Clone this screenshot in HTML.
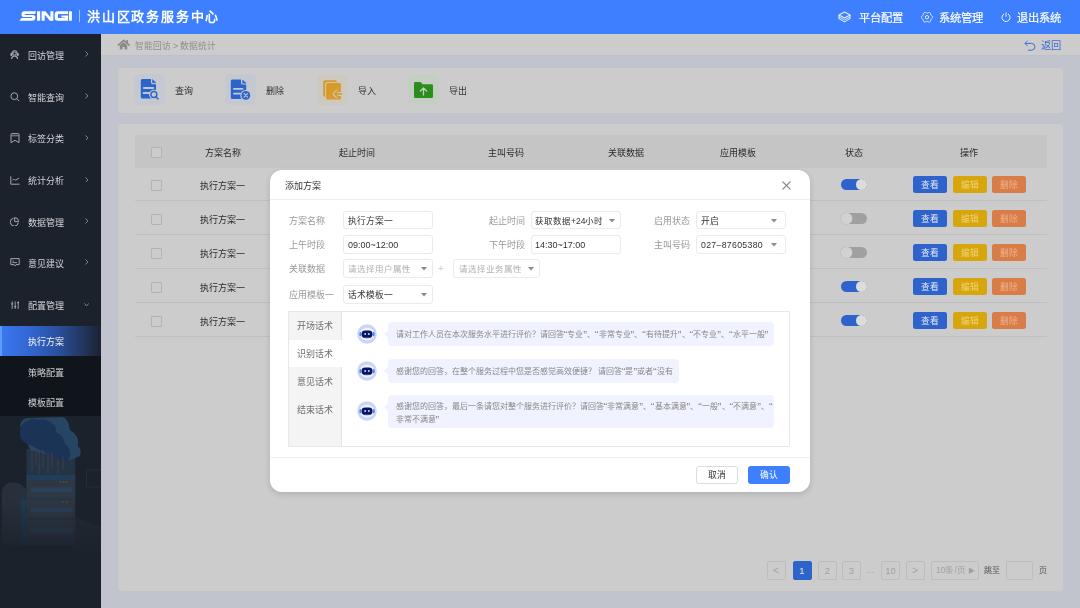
<!DOCTYPE html>
<html lang="zh-CN">
<head>
<meta charset="utf-8">
<style>
*{box-sizing:border-box;margin:0;padding:0}
html,body{will-change:transform;width:1080px;height:608px;overflow:hidden;background:#c1c4cd;font-family:"Liberation Sans",sans-serif;}
.abs{position:absolute}
#hdr{left:0;top:0;width:1080px;height:34px;background:#3d7ffe;color:#fff}
#side{left:0;top:34px;width:101px;height:574px;background:#1c222b;overflow:hidden}
#crumb{left:101px;top:34px;width:979px;height:22px;background:#cccccc;border-bottom:1px solid #bec1c9}
#tool{left:118px;top:67.5px;width:945px;height:45px;background:#cccccc;border-radius:4px}
#card{left:118px;top:124px;width:945px;height:467px;background:#cccccc;border-radius:4px}
.t{white-space:nowrap;line-height:1}
.ib{top:6.5px;width:31px;height:31px;border-radius:5px}
.tl{top:19.1px;font-size:9px;color:#333}
.cb{width:11px;height:11px;border:1px solid #b3b3b3;border-radius:1px;background:#cccccc}
.th span{position:absolute;left:0;top:0;transform:translateX(-50%);font-size:9px;color:#2b2b2b;top:25.2px}
.th{top:0}
.row{left:17px;width:911.5px;height:34px;border-bottom:1px solid #bfbfbf}
.td{top:15px;font-size:9px;color:#2b2b2b}
.tg{width:26px;height:11.5px;border-radius:5.75px;background:#a0a0a0}
.tg i{position:absolute;left:0.3px;top:0.5px;width:10.5px;height:10.5px;border-radius:50%;background:#d2d2d2;box-shadow:0 0 0 0.5px #b8b8b8}
.tg.on{background:#2e63cb}
.tg.on i{left:15.2px;background:#dcdcdc;box-shadow:none}
.bt{width:34px;height:17px;border-radius:2.5px;font-size:8.75px;line-height:18px;text-align:center;color:#e8ecf6}
.bv{background:#2e63cb}
.be{background:#d7a60c;color:#f2d27a}
.bd{background:#d87c48;color:#f0b58e}
.pg{width:19px;height:18.5px;border:1px solid #bdbdbd;border-radius:2px;font-size:9.5px;line-height:17px;text-align:center;color:#a0a0a0}
.pg.act{background:#2e63cb;border-color:#2e63cb;color:#dfe6f5}
#modal{left:270px;top:170px;width:540px;height:322px;background:#fff;border-radius:12px;box-shadow:0 2px 6px rgba(0,0,0,0.14)}
.lb{font-size:9px;color:#999}
.ip{height:18.5px;border:1px solid #ebebeb;border-radius:3px}
.ip span{position:absolute;left:4.5px;top:5px;font-size:8.75px;line-height:1;color:#333;white-space:nowrap}
.ph span{color:#b0b0b0;font-size:8.5px}
.tb{left:27.3px;font-size:9px;color:#6e6e6e}
.bb{background:#f0f3ff;border-radius:4px}
.bb i{position:absolute;left:-4px;top:8px;width:0;height:0;border-top:4px solid transparent;border-bottom:4px solid transparent;border-right:4px solid #f0f3ff}
.bb span{position:absolute;left:8px;font-size:8px;line-height:1;color:#888;white-space:nowrap}
.q{font-weight:normal;margin:0;font-size:11px;line-height:0;vertical-align:-1.5px}
.av{width:20px;height:20px}
.btn{height:18.5px;border-radius:3px;font-size:8.75px;line-height:17.5px;text-align:center}
.mi{left:28px;font-size:9px;color:#d2d4d8}
.arr{left:85px;font-size:10px;line-height:10px;color:#8a8f98}
</style>
</head>
<body>
<!-- header -->
<div id="hdr" class="abs">
  <svg class="abs" style="left:19px;top:10.5px" width="54" height="10" viewBox="19 10.5 54 10" fill="#fff">
    <path d="M24.2 10.8 H35.9 L35.2 13.4 H25.2 Q24.5 13.4 24.5 14 Q24.5 14.4 25.2 14.4 H32.5 Q35.6 14.4 35.4 17 Q35.2 20.2 32 20.2 H19.4 L21.6 17.6 H31.4 Q32.2 17.6 32.2 17 Q32.2 16.6 31.4 16.6 H24.4 Q21.4 16.6 21.5 13.9 Q21.7 10.8 24.2 10.8 Z"/>
    <path d="M37 10.8 H40.2 V20.2 H37 Z"/>
    <path d="M41.6 20.2 V10.8 H45.4 L50.4 16.8 V10.8 H53.4 V20.2 H49.8 L44.7 14.2 V20.2 Z"/>
    <path d="M58 10.8 H68 V13.4 H58.6 Q57.9 13.4 57.9 14.2 V16.9 Q57.9 17.6 58.6 17.6 H64.9 V16.9 H61.4 V14.9 H68 V20.2 H57.6 Q54.7 20.2 54.7 17.3 V13.8 Q54.7 10.8 58 10.8 Z"/>
    <path d="M68.9 10.8 H71.9 V20.2 H68.9 Z"/>
  </svg>
  <div class="abs" style="left:79px;top:9.5px;width:1px;height:12px;background:rgba(255,255,255,.55)"></div>
  <div class="abs t" style="left:87px;top:9.5px;font-size:13px;font-weight:bold;letter-spacing:1.8px">洪山区政务服务中心</div>
  <svg class="abs" style="left:837.5px;top:10.5px" width="13" height="12" viewBox="0 0 13 12" fill="none" stroke="rgba(255,255,255,0.85)" stroke-width="1.1" stroke-linejoin="round">
    <path d="M6.5 0.9 L12 3.9 L6.5 6.9 L1 3.9 Z"/>
    <path d="M1 3.9 V7.6 L6.5 10.9 L12 7.6 V3.9"/>
    <path d="M1 5.9 L6.5 8.9 L12 5.9" stroke-width="0.9"/>
  </svg>
  <div class="abs t" style="left:858.8px;top:12.6px;font-size:11.25px;-webkit-text-stroke:0.2px #fff">平台配置</div>
  <svg class="abs" style="left:920.5px;top:12px" width="12" height="10.5" viewBox="0 0 12 10.5" fill="none" stroke="#fff" stroke-width="0.85" stroke-linejoin="round">
    <path d="M11.72 5.25 L11.62 5.71 L11.34 6.12 L10.96 6.48 L10.54 6.78 L10.18 7.06 L9.93 7.35 L9.78 7.70 L9.70 8.13 L9.63 8.61 L9.49 9.10 L9.24 9.53 L8.86 9.84 L8.39 9.99 L7.86 9.97 L7.33 9.84 L6.84 9.66 L6.40 9.51 L6.00 9.45 L5.60 9.51 L5.16 9.66 L4.67 9.84 L4.14 9.97 L3.61 9.99 L3.14 9.84 L2.76 9.53 L2.51 9.10 L2.37 8.61 L2.30 8.13 L2.22 7.70 L2.07 7.35 L1.82 7.06 L1.46 6.78 L1.04 6.48 L0.66 6.12 L0.38 5.71 L0.28 5.25 L0.38 4.79 L0.66 4.38 L1.04 4.02 L1.46 3.72 L1.82 3.44 L2.07 3.15 L2.22 2.80 L2.30 2.37 L2.37 1.89 L2.51 1.40 L2.76 0.97 L3.14 0.66 L3.61 0.51 L4.14 0.53 L4.67 0.66 L5.16 0.84 L5.60 0.99 L6.00 1.05 L6.40 0.99 L6.84 0.84 L7.33 0.66 L7.86 0.53 L8.39 0.51 L8.86 0.66 L9.24 0.97 L9.49 1.40 L9.63 1.89 L9.70 2.37 L9.78 2.80 L9.93 3.15 L10.18 3.44 L10.54 3.72 L10.96 4.02 L11.34 4.38 L11.62 4.79 L11.72 5.25Z"/>
    <circle cx="6" cy="5.25" r="1.7"/>
  </svg>
  <div class="abs t" style="left:938.8px;top:12.6px;font-size:11.25px;-webkit-text-stroke:0.2px #fff">系统管理</div>
  <svg class="abs" style="left:1001px;top:12px" width="10" height="10" viewBox="0 0 10 10" fill="none" stroke="#fff" stroke-width="0.9">
    <path d="M3 2 A4 4 0 1 0 7 2"/><path d="M5 0.5 V4.8"/>
  </svg>
  <div class="abs t" style="left:1016.8px;top:12.6px;font-size:11.25px;-webkit-text-stroke:0.2px #fff">退出系统</div>
</div>
<!-- sidebar -->
<div id="side" class="abs">
  <svg class="abs" style="left:10px;top:15.6px" width="9.2" height="9.4" viewBox="0 0 9.2 9.4" fill="none" stroke="#a3a7ae" stroke-width="1.1"><path d="M1.9 4.6 Q1.9 0.8 4.6 0.8 Q7.3 0.8 7.3 4.6"/><ellipse cx="1.5" cy="4.5" rx="1.2" ry="1.7" fill="#a3a7ae" stroke="none"/><ellipse cx="7.7" cy="4.5" rx="1.2" ry="1.7" fill="#a3a7ae" stroke="none"/><circle cx="4.6" cy="3.6" r="1.5" stroke-width="1"/><path d="M1.4 9.2 Q2.2 5.9 4.6 5.9 Q7 5.9 7.8 9.2"/></svg>
  <svg class="abs" style="left:9.5px;top:58px" width="10" height="10" viewBox="0 0 10 10" fill="none" stroke="#a3a7ae" stroke-width="1"><circle cx="4.3" cy="4.2" r="3.4"/><path d="M6.8 6.7 L9.2 9.1"/></svg>
  <svg class="abs" style="left:9.5px;top:99px" width="10" height="10.5" viewBox="0 0 10 10.5" fill="none" stroke="#a3a7ae" stroke-width="1"><path d="M1 1.5 Q1 0.6 1.9 0.6 H8.1 Q9 0.6 9 1.5 V9.6 L5 7.3 L1 9.6 Z"/><path d="M1.3 2.6 H8.7" stroke-width="1.6" opacity="0.6"/></svg>
  <svg class="abs" style="left:9.5px;top:141.5px" width="10" height="9" viewBox="0 0 10 9" fill="none" stroke="#a3a7ae" stroke-width="1"><path d="M0.8 0.3 V8.2 H9.5"/><path d="M2.5 4.2 Q3.5 2.8 4.5 3.6 Q5.8 4.8 7 3.4 L9 2"/></svg>
  <svg class="abs" style="left:9.2px;top:182.7px" width="10.5" height="9.5" viewBox="0 0 10.5 9.5" fill="none" stroke="#a3a7ae" stroke-width="1"><path d="M4.5 1.2 A4 4 0 1 0 9.3 5.6"/><path d="M5.6 0.6 A4 4 0 0 1 9.6 4.6 H5.6 Z"/></svg>
  <svg class="abs" style="left:9.5px;top:224.2px" width="10" height="9" viewBox="0 0 10 9" fill="none" stroke="#a3a7ae" stroke-width="1"><path d="M0.8 0.6 H9.2 V6.6 H6 L5 7.9 L4 6.6 H0.8 Z"/><path d="M2.5 3 H4 M2.5 4.6 H7" stroke-width="0.9"/></svg>
  <svg class="abs" style="left:10.5px;top:266.5px" width="8.5" height="8.5" viewBox="0 0 8.5 8.5" fill="none" stroke="#a3a7ae" stroke-width="0.9"><path d="M1.2 0.3 V8.3 M4.2 0.3 V8.3 M7.2 0.3 V8.3"/><path d="M0.2 2.8 H2.2 M3.2 5.6 H5.2 M6.2 1.6 H8.2" stroke-width="1.3"/></svg>
  <div class="abs t mi" style="top:17.8px">回访管理</div><svg class="abs" style="left:84.6px;top:17.1px" width="3.6" height="5.8" viewBox="0 0 3.6 5.8" fill="none" stroke="#8d9198" stroke-width="0.9"><path d="M0.4 0.4 L3 2.9 L0.4 5.4"/></svg>
  <div class="abs t mi" style="top:59.8px">智能查询</div><svg class="abs" style="left:84.6px;top:59.1px" width="3.6" height="5.8" viewBox="0 0 3.6 5.8" fill="none" stroke="#8d9198" stroke-width="0.9"><path d="M0.4 0.4 L3 2.9 L0.4 5.4"/></svg>
  <div class="abs t mi" style="top:101.3px">标签分类</div><svg class="abs" style="left:84.6px;top:100.6px" width="3.6" height="5.8" viewBox="0 0 3.6 5.8" fill="none" stroke="#8d9198" stroke-width="0.9"><path d="M0.4 0.4 L3 2.9 L0.4 5.4"/></svg>
  <div class="abs t mi" style="top:143.3px">统计分析</div><svg class="abs" style="left:84.6px;top:142.6px" width="3.6" height="5.8" viewBox="0 0 3.6 5.8" fill="none" stroke="#8d9198" stroke-width="0.9"><path d="M0.4 0.4 L3 2.9 L0.4 5.4"/></svg>
  <div class="abs t mi" style="top:184.8px">数据管理</div><svg class="abs" style="left:84.6px;top:184.1px" width="3.6" height="5.8" viewBox="0 0 3.6 5.8" fill="none" stroke="#8d9198" stroke-width="0.9"><path d="M0.4 0.4 L3 2.9 L0.4 5.4"/></svg>
  <div class="abs t mi" style="top:225.8px">意见建议</div><svg class="abs" style="left:84.6px;top:225.1px" width="3.6" height="5.8" viewBox="0 0 3.6 5.8" fill="none" stroke="#8d9198" stroke-width="0.9"><path d="M0.4 0.4 L3 2.9 L0.4 5.4"/></svg>
  <div class="abs t mi" style="top:268.3px">配置管理</div><svg class="abs" style="left:83.9px;top:268.7px" width="5.2" height="3.6" viewBox="0 0 5.2 3.6" fill="none" stroke="#8d9198" stroke-width="0.9"><path d="M0.4 0.4 L2.6 2.9 L4.8 0.4"/></svg>
<svg class="abs" style="left:0;top:336px" width="101" height="215" viewBox="0 370 101 215">
    <defs>
      <linearGradient id="fade" x1="0" y1="0" x2="0" y2="1"><stop offset="0" stop-color="#1c222b" stop-opacity="0"/><stop offset="0.6" stop-color="#1c222b" stop-opacity="0"/><stop offset="0.86" stop-color="#1c222b" stop-opacity="1"/></linearGradient>
    </defs>
    <path d="M75 517 L101 527 V560 H75 Z" fill="#222a35"/>
    <rect x="86.5" y="470" width="16" height="17" rx="1" fill="none" stroke="#263240" stroke-width="0.8"/>
    <path d="M1.8 545 V494 Q1.8 482.4 13 482.4 Q22 482.4 26.5 490 V545 Z" fill="#27303c"/>
    <rect x="21" y="499.7" width="5.5" height="45" fill="#1f3a55"/>
    <rect x="26.5" y="449" width="48.7" height="96" fill="#243447"/>
    <rect x="26.5" y="475" width="48.7" height="5" fill="#223d58"/>
    <rect x="26.5" y="480" width="48.7" height="18.4" fill="#2e3744"/>
    <rect x="26.5" y="499.7" width="48.7" height="18.3" fill="#2e3744"/>
    <rect x="26.5" y="520" width="48.7" height="16.6" fill="#2e3744"/>
    <rect x="30.8" y="487.3" width="41.9" height="5" fill="#2a4159"/>
    <rect x="30.8" y="507.7" width="41.9" height="4.3" fill="#2a4159"/>
    <rect x="30.8" y="528" width="41.9" height="5" fill="#2a4159"/>
    <path d="M60 482 h1.5 M63 482 h1.5 M66 482 h1.5 M62 502 h1.5 M66 502 h1.5" stroke="#6a5a3a" stroke-width="1.2"/>
    <path d="M20 425 Q22 417 30 418 L62 417 Q68 417 70 430 Q80 436 78 446 Q82 450 80 456 L70 460 L30 450 Z" fill="#264563"/>
    <path d="M20 432 Q20 423 28 421 Q32 417 38 420 Q44 418 50 422 Q56 424 56 432 Q64 436 65 444 Q71 448 70 456 Q69 462 62 461 L24 442 Q19 438 20 432 Z" fill="#1a3357"/>
    <path d="M32 446 V471 M36 452 V465 M39 451 V474 M43 449 V467 M48 455 V474 M52 452 V468 M58 459 V474 M63 456 V470" stroke="#6e4a42" stroke-width="0.7" opacity="0.6"/>
    <rect x="0" y="370" width="101" height="215" fill="url(#fade)"/>
  </svg>
  <div class="abs" style="left:0;top:291.5px;width:101px;height:90.5px;background:#10151c"></div>
  <div class="abs" style="left:0;top:291.5px;width:101px;height:30px;background:linear-gradient(90deg,#5b9dff 0,#5b9dff 2px,#3a77ee 2px,#3369d8 25%,#2b52a2 55%,#22365f 82%,#1b2231 100%)"></div>
  <div class="abs t mi" style="top:304px;color:#f2f4f8">执行方案</div>
  <div class="abs t mi" style="top:335px">策略配置</div>
  <div class="abs t mi" style="top:365.2px">模板配置</div>
</div>
<!-- breadcrumb -->
<div id="crumb" class="abs">
  <svg class="abs" style="left:16px;top:5px" width="13.5" height="11" viewBox="0 0 13.5 11"><path d="M6.75 0.3 L13.2 5.9 L11.9 7 L6.75 2.6 L1.6 7 L0.3 5.9 Z" fill="#8a8a8a"/><path d="M2.8 6.3 L6.5 3.2 L10.2 6.3 V10.5 H7.6 V8 H5.4 V10.5 H2.8 Z" fill="#8a8a8a"/><rect x="9.3" y="1" width="1.6" height="2.8" fill="#8a8a8a"/></svg>
  <div class="abs t" style="left:33.5px;top:7.5px;font-size:8.75px;color:#8f8f8f">智能回访 &gt; 数据统计</div>
  <svg class="abs" style="left:922.5px;top:5.6px" width="12" height="11" viewBox="0 0 12 11" fill="none" stroke="#3f6fd6" stroke-width="1"><path d="M3.5 0.8 L0.9 3.4 L3.5 6"/><path d="M1 3.4 H7.5 A3.4 3.4 0 0 1 7.5 10.2 H4"/></svg>
  <div class="abs t" style="left:939.5px;top:7px;font-size:10.25px;color:#3f6fd6">返回</div>
</div>
<div id="tool" class="abs">
  <div class="abs ib" style="left:16px;background:#c3c8d1"></div>
  <svg class="abs" style="left:22px;top:10.5px" width="20" height="23" viewBox="0 0 20 23">
    <path d="M2.3 1 H11 V4.6 Q11 6.3 12.7 6.3 H16 V19.1 A1.5 1.5 0 0 1 14.5 20.6 H2.3 A1.5 1.5 0 0 1 0.8 19.1 V2.5 A1.5 1.5 0 0 1 2.3 1 Z" fill="#2d64cb"/>
    <path d="M12.5 1.5 L16 4.8 H12.5 Z" fill="#2d64cb" stroke="#2d64cb" stroke-width="0.5" stroke-linejoin="round"/>
    <path d="M3.8 10 H13.3 M3.5 15 H9.8" stroke="#c3c8d1" stroke-width="1.8" stroke-linecap="round"/>
    <circle cx="13.9" cy="16.5" r="4.8" fill="#c3c8d1"/>
    <circle cx="13.9" cy="16.5" r="2.95" fill="none" stroke="#2d64cb" stroke-width="1.4"/>
    <path d="M15.9 18.6 L18 21" stroke="#2d64cb" stroke-width="1.4" stroke-linecap="round"/>
  </svg>
  <div class="abs t tl" style="left:56.5px">查询</div>
  <div class="abs ib" style="left:107px;background:#c3c8d1"></div>
  <svg class="abs" style="left:112px;top:10.5px" width="22" height="23" viewBox="0 0 22 23">
    <path d="M2.3 1.5 H11 V4.9 Q11 6.5 12.7 6.5 H16.2 V19.4 A1.5 1.5 0 0 1 14.7 20.9 H2.3 A1.5 1.5 0 0 1 0.8 19.4 V3 A1.5 1.5 0 0 1 2.3 1.5 Z" fill="#2d64cb"/>
    <path d="M12.6 2 L16.2 5.2 H12.6 Z" fill="#2d64cb" stroke="#2d64cb" stroke-width="0.5" stroke-linejoin="round"/>
    <path d="M3.9 10.9 H12.5 M3.9 15.6 H10.2" stroke="#c3c8d1" stroke-width="1.8" stroke-linecap="round"/>
    <circle cx="15.8" cy="17.4" r="5.5" fill="#c3c8d1"/>
    <circle cx="15.8" cy="17.4" r="4.4" fill="#2d64cb"/>
    <path d="M14.1 15.7 L17.5 19.1 M17.5 15.7 L14.1 19.1" stroke="#c3c8d1" stroke-width="1.1" stroke-linecap="round"/>
  </svg>
  <div class="abs t tl" style="left:147.5px">删除</div>
  <div class="abs ib" style="left:198.5px;background:#cdc8c0"></div>
  <svg class="abs" style="left:205px;top:12.5px" width="20" height="21" viewBox="323 80 20 21">
    <rect x="323.2" y="80.3" width="13.6" height="16.6" rx="1.6" fill="#d89b2a"/>
    <rect x="325.1" y="81.9" width="16.8" height="18.6" rx="2.2" fill="#cdc8c0"/>
    <rect x="326.1" y="82.9" width="14.8" height="16.6" rx="1.6" fill="#d89b2a"/>
    <path d="M341.5 93.9 H335.2 M337.9 90.9 L334.6 93.9 L337.9 96.9" stroke="#cdc8c0" stroke-width="4" fill="none" stroke-linejoin="round"/>
    <path d="M341.5 93.9 H335.2 M337.9 90.9 L334.6 93.9 L337.9 96.9" stroke="#d89b2a" stroke-width="1.6" fill="none" stroke-linejoin="round" stroke-linecap="round"/>
  </svg>
  <div class="abs t tl" style="left:239.5px">导入</div>
  <div class="abs ib" style="left:290px;background:#c5cec2"></div>
  <svg class="abs" style="left:296px;top:14.3px" width="19" height="16" viewBox="0 0 19 16">
    <path d="M0 1.2 A1.2 1.2 0 0 1 1.2 0 H6.6 L8.6 2.2 H17.8 A1.2 1.2 0 0 1 19 3.4 V14.8 A1.2 1.2 0 0 1 17.8 16 H1.2 A1.2 1.2 0 0 1 0 14.8 Z" fill="#2b8d1c"/>
    <path d="M9.5 13 V6 M6.4 9 L9.5 5.9 L12.6 9" stroke="#c5cec2" stroke-width="1.3" fill="none" stroke-linecap="round" stroke-linejoin="round"/>
  </svg>
  <div class="abs t tl" style="left:330.5px">导出</div>
</div>
<div id="card" class="abs">
  <div class="abs" style="left:17px;top:11px;width:911.5px;height:32.5px;background:#c5c5c5"></div>
  <div class="abs cb" style="left:33px;top:23px"></div>
  <div class="abs t th" style="left:105px;width:0"><span>方案名称</span></div>
  <div class="abs t th" style="left:239px;width:0"><span>起止时间</span></div>
  <div class="abs t th" style="left:388px;width:0"><span>主叫号码</span></div>
  <div class="abs t th" style="left:508px;width:0"><span>关联数据</span></div>
  <div class="abs t th" style="left:620px;width:0"><span>应用模板</span></div>
  <div class="abs t th" style="left:736px;width:0"><span>状态</span></div>
  <div class="abs t th" style="left:851px;width:0"><span>操作</span></div>
  <div class="abs row" style="top:42.5px">
    <div class="abs cb" style="left:16px;top:13px"></div>
    <div class="abs t td" style="left:65px">执行方案一</div>
  </div>
  <div class="abs tg on" style="left:723px;top:54.7px"><i></i></div>
  <div class="abs bt bv" style="left:795px;top:52.0px">查看</div>
  <div class="abs bt be" style="left:835px;top:52.0px">编辑</div>
  <div class="abs bt bd" style="left:874px;top:52.0px">删除</div>
  <div class="abs row" style="top:76.5px">
    <div class="abs cb" style="left:16px;top:13px"></div>
    <div class="abs t td" style="left:65px">执行方案一</div>
  </div>
  <div class="abs tg" style="left:723px;top:88.7px"><i></i></div>
  <div class="abs bt bv" style="left:795px;top:86.0px">查看</div>
  <div class="abs bt be" style="left:835px;top:86.0px">编辑</div>
  <div class="abs bt bd" style="left:874px;top:86.0px">删除</div>
  <div class="abs row" style="top:110.5px">
    <div class="abs cb" style="left:16px;top:13px"></div>
    <div class="abs t td" style="left:65px">执行方案一</div>
  </div>
  <div class="abs tg" style="left:723px;top:122.7px"><i></i></div>
  <div class="abs bt bv" style="left:795px;top:120.0px">查看</div>
  <div class="abs bt be" style="left:835px;top:120.0px">编辑</div>
  <div class="abs bt bd" style="left:874px;top:120.0px">删除</div>
  <div class="abs row" style="top:144.5px">
    <div class="abs cb" style="left:16px;top:13px"></div>
    <div class="abs t td" style="left:65px">执行方案一</div>
  </div>
  <div class="abs tg on" style="left:723px;top:156.7px"><i></i></div>
  <div class="abs bt bv" style="left:795px;top:154.0px">查看</div>
  <div class="abs bt be" style="left:835px;top:154.0px">编辑</div>
  <div class="abs bt bd" style="left:874px;top:154.0px">删除</div>
  <div class="abs row" style="top:178.5px">
    <div class="abs cb" style="left:16px;top:13px"></div>
    <div class="abs t td" style="left:65px">执行方案一</div>
  </div>
  <div class="abs tg on" style="left:723px;top:190.7px"><i></i></div>
  <div class="abs bt bv" style="left:795px;top:188.0px">查看</div>
  <div class="abs bt be" style="left:835px;top:188.0px">编辑</div>
  <div class="abs bt bd" style="left:874px;top:188.0px">删除</div>

  <div class="abs pg" style="left:648.5px;top:437px;font-size:10.5px">&lt;</div>
  <div class="abs pg act" style="left:674.5px;top:437px">1</div>
  <div class="abs pg" style="left:700px;top:437px">2</div>
  <div class="abs pg" style="left:724px;top:437px">3</div>
  <div class="abs t" style="left:748.5px;top:444.5px;font-size:8px;color:#a0a0a0">···</div>
  <div class="abs pg" style="left:763px;top:437px">10</div>
  <div class="abs pg" style="left:787.5px;top:437px;font-size:10.5px">&gt;</div>
  <div class="abs pg" style="left:813px;top:437px;width:47.5px;text-align:left;padding-left:4px;font-size:8.5px">10条/页 <span style="font-size:7px">&#9654;</span></div>
  <div class="abs t" style="left:866px;top:443px;font-size:8px;color:#555">跳至</div>
  <div class="abs pg" style="left:887.5px;top:437px;width:27.5px"></div>
  <div class="abs t" style="left:920.5px;top:443px;font-size:8px;color:#555">页</div>
</div>
<div id="modal" class="abs">
  <div class="abs t" style="left:15px;top:12px;font-size:9px;color:#333">添加方案</div>
  <svg class="abs" style="left:512px;top:10.5px" width="9" height="9" viewBox="0 0 9 9"><path d="M0.5 0.5 L8.5 8.5 M8.5 0.5 L0.5 8.5" stroke="#8c8c8c" stroke-width="1.1"/></svg>
  <div class="abs" style="left:0;top:29px;width:540px;height:1px;background:#eeeeee"></div>

  <div class="abs t lb" style="left:18.5px;top:46.7px">方案名称</div>
  <div class="abs ip" style="left:72.5px;top:40.75px;width:90px"><span>执行方案一</span></div>
  <div class="abs t lb" style="left:218.5px;top:46.7px">起止时间</div>
  <div class="abs ip" style="left:261px;top:40.75px;width:89.5px"><span style="left:3px;font-size:8.5px;top:5.2px">获取数据+24小时</span><svg class="abs" style="right:5px;top:7px" width="6" height="4" viewBox="0 0 6 4"><path d="M0 0 H6 L3 3.6 Z" fill="#8a8a8a"/></svg></div>
  <div class="abs t lb" style="left:383.5px;top:46.7px">启用状态</div>
  <div class="abs ip" style="left:425.5px;top:40.75px;width:90px"><span>开启</span><svg class="abs" style="right:8px;top:7px" width="6" height="4" viewBox="0 0 6 4"><path d="M0 0 H6 L3 3.6 Z" fill="#8a8a8a"/></svg></div>

  <div class="abs t lb" style="left:18.5px;top:71.2px">上午时段</div>
  <div class="abs ip" style="left:72.5px;top:65px;width:90px"><span style="font-size:9px">09:00~12:00</span></div>
  <div class="abs t lb" style="left:218.5px;top:71.2px">下午时段</div>
  <div class="abs ip" style="left:261px;top:65px;width:89.5px"><span style="left:3px;font-size:9px">14:30~17:00</span></div>
  <div class="abs t lb" style="left:383.5px;top:71.2px">主叫号码</div>
  <div class="abs ip" style="left:425.5px;top:65px;width:90px"><span style="letter-spacing:0.3px">027–87605380</span><svg class="abs" style="right:8px;top:7px" width="6" height="4" viewBox="0 0 6 4"><path d="M0 0 H6 L3 3.6 Z" fill="#8a8a8a"/></svg></div>

  <div class="abs t lb" style="left:18.5px;top:95.2px">关联数据</div>
  <div class="abs ip ph" style="left:72.5px;top:89px;width:90px"><span>请选择用户属性</span><svg class="abs" style="right:5px;top:7px" width="6" height="4" viewBox="0 0 6 4"><path d="M0 0 H6 L3 3.6 Z" fill="#8a8a8a"/></svg></div>
  <div class="abs t" style="left:168px;top:94px;font-size:10px;color:#d0d0d0">+</div>
  <div class="abs ip ph" style="left:183px;top:89px;width:86.5px"><span>请选择业务属性</span><svg class="abs" style="right:5px;top:7px" width="6" height="4" viewBox="0 0 6 4"><path d="M0 0 H6 L3 3.6 Z" fill="#8a8a8a"/></svg></div>

  <div class="abs t lb" style="left:18.5px;top:121.2px">应用模板一</div>
  <div class="abs ip" style="left:72.5px;top:115px;width:90px"><span>话术模板一</span><svg class="abs" style="right:5px;top:7px" width="6" height="4" viewBox="0 0 6 4"><path d="M0 0 H6 L3 3.6 Z" fill="#8a8a8a"/></svg></div>

  <div class="abs" style="left:18px;top:141px;width:501.5px;height:136px;border:1px solid #e8e8e8"></div>
  <div class="abs" style="left:19px;top:142px;width:52.5px;height:134px;background:#f4f4f4;border-right:1px solid #e6e6e6"></div>
  <div class="abs" style="left:19px;top:169.5px;width:52.5px;height:27.5px;background:#fff"></div>
  <div class="abs t tb" style="top:152.3px">开场话术</div>
  <div class="abs t tb" style="top:179.8px">识别话术</div>
  <div class="abs t tb" style="top:207.8px">意见话术</div>
  <div class="abs t tb" style="top:235.8px">结束话术</div>

  <div class="abs av" style="left:87px;top:154px"><svg width="20" height="20" viewBox="0 0 20 20"><circle cx="10" cy="10" r="9.8" fill="#cad5f7"/><ellipse cx="10" cy="10" rx="7.4" ry="6.3" fill="#f1f5ff"/><path d="M3.8 12 Q10 17.6 16.2 12 Q10 15.2 3.8 12Z" fill="#9fbdf3"/><rect x="2.4" y="8" width="2" height="4.2" rx="1" fill="#4585f3"/><rect x="15.6" y="8" width="2" height="4.2" rx="1" fill="#4585f3"/><rect x="4.6" y="6.6" width="10.8" height="7.2" rx="3.4" fill="#0c1462"/><circle cx="8.2" cy="10" r="1" fill="#c4dbff"/><circle cx="11.8" cy="10" r="1" fill="#c4dbff"/></svg></div>
  <div class="abs bb" style="left:117.5px;top:152px;width:386px;height:23.5px"><i></i><span style="top:9.3px">请对工作人员在本次服务水平进行评价？请回答<b class="q">“</b>专业<b class="q">”</b>、<b class="q">“</b>非常专业<b class="q">”</b>、<b class="q">“</b>有待提升<b class="q">”</b>、<b class="q">“</b>不专业<b class="q">”</b>、<b class="q">“</b>水平一般<b class="q">”</b></span></div>
  <div class="abs av" style="left:87px;top:191px"><svg width="20" height="20" viewBox="0 0 20 20"><circle cx="10" cy="10" r="9.8" fill="#cad5f7"/><ellipse cx="10" cy="10" rx="7.4" ry="6.3" fill="#f1f5ff"/><path d="M3.8 12 Q10 17.6 16.2 12 Q10 15.2 3.8 12Z" fill="#9fbdf3"/><rect x="2.4" y="8" width="2" height="4.2" rx="1" fill="#4585f3"/><rect x="15.6" y="8" width="2" height="4.2" rx="1" fill="#4585f3"/><rect x="4.6" y="6.6" width="10.8" height="7.2" rx="3.4" fill="#0c1462"/><circle cx="8.2" cy="10" r="1" fill="#c4dbff"/><circle cx="11.8" cy="10" r="1" fill="#c4dbff"/></svg></div>
  <div class="abs bb" style="left:117.5px;top:189px;width:291px;height:23.5px"><i></i><span style="top:9.1px">感谢您的回答，在整个服务过程中您是否感觉高效便捷？ 请回答<b class="q">“</b>是<b class="q">”</b>或者<b class="q">“</b>没有</span></div>
  <div class="abs av" style="left:87px;top:231px"><svg width="20" height="20" viewBox="0 0 20 20"><circle cx="10" cy="10" r="9.8" fill="#cad5f7"/><ellipse cx="10" cy="10" rx="7.4" ry="6.3" fill="#f1f5ff"/><path d="M3.8 12 Q10 17.6 16.2 12 Q10 15.2 3.8 12Z" fill="#9fbdf3"/><rect x="2.4" y="8" width="2" height="4.2" rx="1" fill="#4585f3"/><rect x="15.6" y="8" width="2" height="4.2" rx="1" fill="#4585f3"/><rect x="4.6" y="6.6" width="10.8" height="7.2" rx="3.4" fill="#0c1462"/><circle cx="8.2" cy="10" r="1" fill="#c4dbff"/><circle cx="11.8" cy="10" r="1" fill="#c4dbff"/></svg></div>
  <div class="abs bb" style="left:117.5px;top:225px;width:386px;height:33px"><i></i><span style="top:6.2px;line-height:12.4px">感谢您的回答，最后一条请您对整个服务进行评价？请回答<b class="q">“</b>非常满意<b class="q">”</b>、<b class="q">“</b>基本满意<b class="q">”</b>、<b class="q">“</b>一般<b class="q">”</b>、<b class="q">“</b>不满意<b class="q">”</b>、<b class="q">“</b><br>非常不满意<b class="q">”</b></span></div>

  <div class="abs" style="left:0;top:286.5px;width:540px;height:1px;background:#eeeeee"></div>
  <div class="abs btn" style="left:426.25px;top:295.5px;width:41.5px;border:1px solid #dcdcdc;color:#333;background:#fff">取消</div>
  <div class="abs btn" style="left:477.9px;top:295.5px;width:42px;background:#3d7ffe;color:#fff;line-height:18.5px">确认</div>
</div>
</body>
</html>
